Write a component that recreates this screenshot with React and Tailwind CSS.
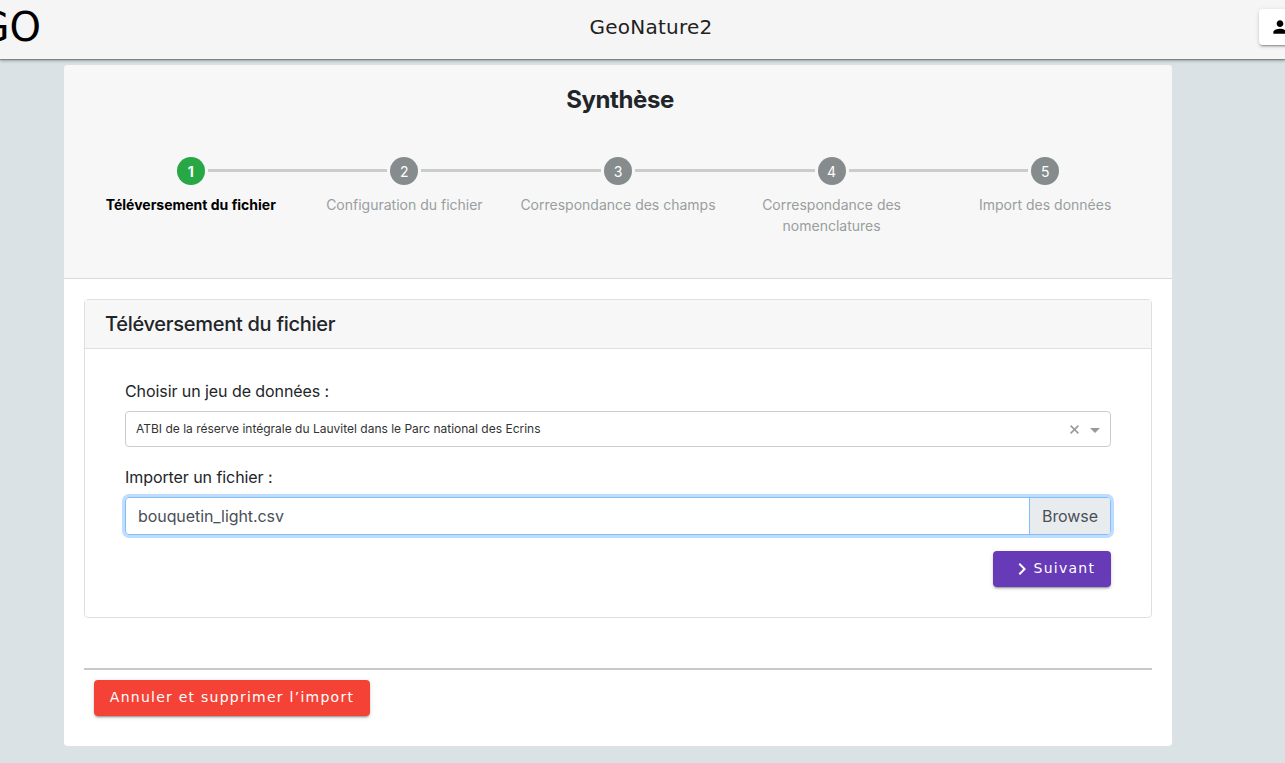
const steps = [
  { label: "Téléversement du fichier", active: true },
  { label: "Configuration du fichier" },
  { label: "Correspondance des champs" },
  { label: "Correspondance des nomenclatures" },
  { label: "Import des données" },
];

const raised =
  "shadow-[0_3px_1px_-2px_rgba(0,0,0,0.2),0_2px_2px_0_rgba(0,0,0,0.14),0_1px_5px_0_rgba(0,0,0,0.12)]";

function Toolbar() {
  return (
    <header className="relative z-10 flex h-[59px] shrink-0 items-start justify-between bg-[#f5f5f5] font-['DejaVu_Sans',sans-serif] shadow-[0_1px_1px_rgba(80,88,92,0.5),0_2px_3px_rgba(80,88,92,0.4)]">
      <div className="flex w-[41px] justify-end overflow-hidden whitespace-nowrap text-[40px] leading-[54px] text-black">
        GO
      </div>
      <h1 className="ml-3 pt-[11px] text-[20px] leading-8 tracking-[0.25px] text-[#212121]">GeoNature2</h1>
      <div className="h-[59px] w-[36px] overflow-hidden pt-[9px] pl-[10px]">
        <button className={`flex h-9 w-16 items-center rounded-l bg-white pl-[11px] ${raised}`}>
          <svg viewBox="0 0 24 24" className="h-5 w-5 fill-black">
            <path d="M12 12c2.21 0 4-1.79 4-4s-1.79-4-4-4-4 1.79-4 4 1.79 4 4 4zm0 2c-2.67 0-8 1.34-8 4v2h16v-2c0-2.66-5.33-4-8-4z" />
          </svg>
        </button>
      </div>
    </header>
  );
}

function Stepper() {
  return (
    <ol className="flex">
      {steps.map((step, i) => (
        <li key={i} className="flex min-w-0 flex-1 flex-col items-center">
          <div className="flex w-full items-center gap-[3px]">
            <span className={`-mt-px h-[3px] flex-1 ${i === 0 ? "" : "bg-[#cbcccc]"}`} />
            <span
              className={`flex h-7 w-7 items-center justify-center rounded-full pt-px text-[14px] text-white ${
                step.active ? "bg-[#28a745] font-bold" : "bg-[#868c8e]"
              }`}
            >
              {i + 1}
            </span>
            <span className={`-mt-px h-[3px] flex-1 ${i === steps.length - 1 ? "" : "bg-[#cbcccc]"}`} />
          </div>
          <span
            className={`mt-[9px] px-1.5 text-center text-[14px] leading-[21px] ${
              step.active ? "font-bold text-black" : "text-[#999e9f]"
            }`}
          >
            {step.label}
          </span>
        </li>
      ))}
    </ol>
  );
}

function UploadPanel() {
  return (
    <section className="h-[319px] rounded border border-[#dfdfdf] bg-white">
      <div className="flex h-[49px] items-center border-b border-[#dfdfdf] bg-[#f7f7f7] px-5">
        <h3 className="text-[20px] font-medium leading-6 tracking-[-0.28px]">Téléversement du fichier</h3>
      </div>
      <div className="flex flex-col px-10 pt-[30px]">
        <label className="text-[16px] leading-6 tracking-[-0.075px]">Choisir un jeu de données :</label>
        <div className="mt-2 flex h-9 items-center rounded border border-[#ccc] px-2.5 text-[12px] text-[#333]">
          <span className="flex-1">ATBI de la réserve intégrale du Lauvitel dans le Parc national des Ecrins</span>
          <svg viewBox="0 0 9 9" className="mt-px mr-[11.5px] h-[9px] w-[9px]" stroke="#999" strokeWidth="1.5">
            <path d="M.6.6 8.4 8.4M8.4.6.6 8.4" />
          </svg>
          <svg viewBox="0 0 10 5" className="mt-[3px] h-[5px] w-[10px] fill-[#999]">
            <path d="M0 0h10L5 5z" />
          </svg>
        </div>
        <label className="mt-[18px] text-[16px] leading-6 tracking-[-0.075px]">Importer un fichier :</label>
        <div className="mt-2 flex h-[38px] overflow-hidden rounded border border-[#80bdff] text-[16px] leading-6 tracking-[-0.075px] text-[#495057] shadow-[0_0_0_3px_#bfdeff]">
          <span className="flex-1 px-3 py-1.5">bouquetin_light.csv</span>
          <span className="w-[81px] border-l border-[#80bdff] bg-[#e9ecef] px-3 py-1.5">Browse</span>
        </div>
        <button
          className={`mt-4 flex h-9 w-[118px] items-center self-end rounded bg-[#673ab7] pl-[16.5px] font-['DejaVu_Sans',sans-serif] text-[14px] tracking-[1.25px] text-white ${raised}`}
        >
          <svg viewBox="0 0 24 24" className="h-6 w-6 fill-white">
            <path d="M10 6 8.59 7.41 13.17 12l-4.58 4.59L10 18l6-6z" />
          </svg>
          <span className="-mt-0.5">Suivant</span>
        </button>
      </div>
    </section>
  );
}

export default function App() {
  return (
    <div className="flex h-[763px] flex-col overflow-hidden bg-[#dae2e5] font-['Inter',sans-serif] text-[#212529]">
      <Toolbar />
      <main className="mt-1.5 ml-16 flex h-[681px] w-[1108px] flex-col overflow-hidden rounded bg-white">
        <div className="h-[214px] border-b border-[#d9d9d9] bg-[#f7f7f7] px-5 pt-5">
          <h2 className="mb-[43px] pl-1 text-center text-[24px] font-bold leading-[29px] tracking-[-0.4px]">Synthèse</h2>
          <Stepper />
        </div>
        <div className="px-5 pt-5">
          <UploadPanel />
          <div className="mt-[50px] border-t-2 border-[#c8c7cc] pt-[10px] pl-[10px]">
            <button
              className={`flex h-9 w-[276px] items-center justify-center rounded bg-[#f44336] pb-0.5 font-['DejaVu_Sans',sans-serif] text-[14px] tracking-[1.25px] text-white ${raised}`}
            >
              Annuler et supprimer l’import
            </button>
          </div>
        </div>
      </main>
    </div>
  );
}
